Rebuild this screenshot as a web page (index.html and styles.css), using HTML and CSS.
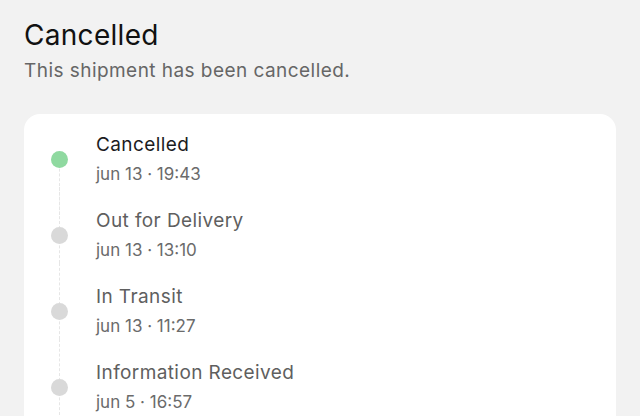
FILE: index.html
```html
<!DOCTYPE html>
<html>
<head>
<meta charset="utf-8">
<link rel="stylesheet" href="styles.css">
</head>
<body>
<main class="page">
  <h1 class="title">Cancelled</h1>
  <p class="subtitle">This shipment has been cancelled.</p>
  <section class="card">
    <ol class="timeline">
      <li class="event current">
        <span class="dot"></span>
        <div class="info">
          <div class="name">Cancelled</div>
          <div class="time">jun 13 · 19:43</div>
        </div>
      </li>
      <li class="event">
        <span class="dot"></span>
        <div class="info">
          <div class="name">Out for Delivery</div>
          <div class="time">jun 13 · 13:10</div>
        </div>
      </li>
      <li class="event">
        <span class="dot"></span>
        <div class="info">
          <div class="name">In Transit</div>
          <div class="time">jun 13 · 11:27</div>
        </div>
      </li>
      <li class="event">
        <span class="dot"></span>
        <div class="info">
          <div class="name">Information Received</div>
          <div class="time">jun 5 · 16:57</div>
        </div>
      </li>
    </ol>
  </section>
</main>
</body>
</html>
```
FILE: styles.css
```css
html, body {
  margin: 0;
  padding: 0;
  background: #f2f2f2;
  height: 100%;
  overflow: hidden;
}
body {
  font-family: Inter, "Noto Sans", sans-serif;
  color: #1c1c1e;
}
.page {
  padding: 18px 24px 0 24px;
}
.title {
  margin: 0;
  font-size: 28px;
  line-height: 34px;
  font-weight: 400;
  color: #111;
  letter-spacing: 0.3px;
}
.subtitle {
  margin: 7px 0 0 0;
  font-size: 19px;
  line-height: 24px;
  color: #666;
  letter-spacing: 0.45px;
}
.card {
  margin-top: 31px;
  width: 592px;
  background: #fff;
  border-radius: 16px;
  padding: 17px 0 40px 0;
}
.timeline {
  list-style: none;
  margin: 0;
  padding: 0;
}
.event {
  position: relative;
  display: flex;
  align-items: center;
  height: 76px;
  box-sizing: border-box;
  padding-bottom: 20px;
}
.event::before {
  content: "";
  position: absolute;
  left: 35px;
  top: -20px;
  height: 76px;
  border-left: 1px dashed #e6e6e6;
}
.event:first-child::before {
  top: 28px;
  height: 56px;
}
.dot {
  position: relative;
  z-index: 1;
  width: 17px;
  height: 17px;
  border-radius: 50%;
  background: #d9d9d9;
  margin-left: 27px;
  margin-right: 28px;
  flex: none;
}
.current .dot {
  background: #8fd9a0;
}
.info {
  display: flex;
  flex-direction: column;
}
.name {
  font-size: 19px;
  line-height: 24px;
  color: #5f5f5f;
  letter-spacing: 0.4px;
}
.current .name {
  color: #1c1c1e;
}
.time {
  margin-top: 5px;
  font-size: 17px;
  line-height: 24px;
  color: #6b6b6b;
}
```
